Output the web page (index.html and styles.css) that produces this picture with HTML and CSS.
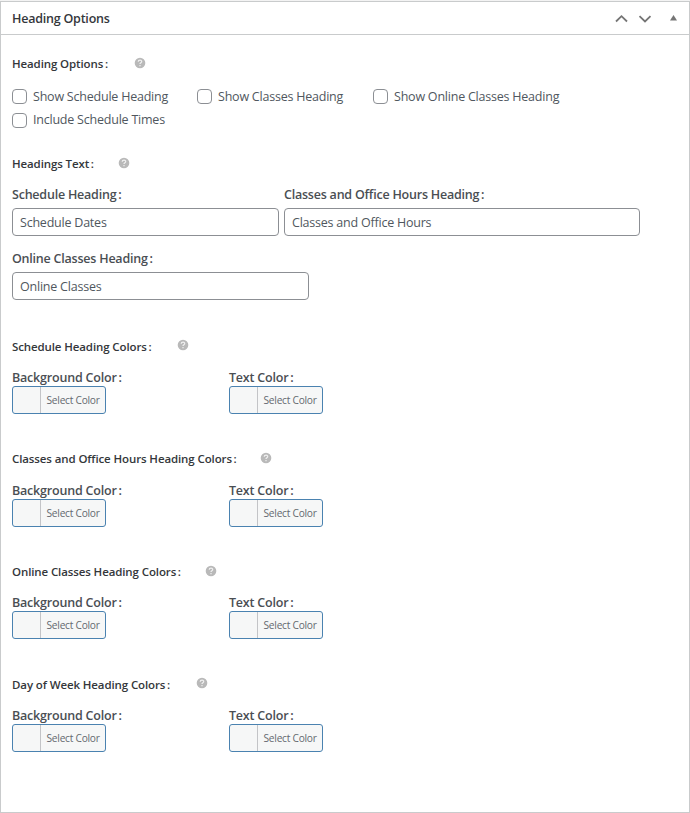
FILE: index.html
```html
<!DOCTYPE html>
<html lang="en">
<head>
<meta charset="utf-8">
<title>Heading Options</title>
<link rel="stylesheet" href="styles.css">
</head>
<body>
<svg width="0" height="0" class="defs">
  <symbol id="help" viewBox="0 0 12 12">
    <circle cx="6" cy="6" r="5.3" fill="#b9b9b9"/>
    <path d="M4.2 4.7C4.3 2.6 7.8 2.6 7.7 4.7C7.6 5.8 6 5.8 6 7.1M6 8.1V9.2" fill="none" stroke="#f0f0f0" stroke-width="1.2"/>
  </symbol>
</svg>
<main class="panel">
  <header class="panel-head">
    <h2>Heading Options</h2>
    <svg class="controls" width="70" height="20" viewBox="0 0 70 20">
      <path d="M4 12.500L9.500 7.200L15 12.500M27.500 7.200L33 12.500L38.500 7.200" fill="none" stroke="#757575" stroke-width="1.800"/>
      <path d="M58 11.500L61.500 6L65 11.500Z" fill="#757575"/>
    </svg>
  </header>
  <section class="options">
    <h3 class="t-options"><span>Heading Options<em> :</em></span><svg class="help"><use href="#help"/></svg></h3>
    <div class="checks">
      <label class="c1"><input type="checkbox"><span>Show Schedule Heading</span></label>
      <label class="c2"><input type="checkbox"><span>Show Classes Heading</span></label>
      <label class="c3"><input type="checkbox"><span>Show Online Classes Heading</span></label>
      <label class="c4"><input type="checkbox"><span>Include Schedule Times</span></label>
    </div>
  </section>
  <section class="texts">
    <h3 class="t-text"><span>Headings Text<em> :</em></span><svg class="help"><use href="#help"/></svg></h3>
    <div class="fields">
      <label class="field f1"><span>Schedule Heading<em> :</em></span><input type="text" value="Schedule Dates"></label>
      <label class="field f2"><span>Classes and Office Hours Heading<em> :</em></span><input type="text" value="Classes and Office Hours"></label>
      <label class="field f3"><span>Online Classes Heading<em> :</em></span><input type="text" value="Online Classes"></label>
    </div>
  </section>
  <section class="colors">
    <h3 class="t-schedule"><span>Schedule Heading Colors<em> :</em></span><svg class="help"><use href="#help"/></svg></h3>
    <div class="pickers">
      <div class="picker bg"><span>Background Color<em> :</em></span><button><i></i><b>Select Color</b></button></div>
      <div class="picker fg"><span>Text Color<em> :</em></span><button><i></i><b>Select Color</b></button></div>
    </div>
  </section>
  <section class="colors">
    <h3 class="t-classes"><span>Classes and Office Hours Heading Colors<em> :</em></span><svg class="help"><use href="#help"/></svg></h3>
    <div class="pickers">
      <div class="picker bg"><span>Background Color<em> :</em></span><button><i></i><b>Select Color</b></button></div>
      <div class="picker fg"><span>Text Color<em> :</em></span><button><i></i><b>Select Color</b></button></div>
    </div>
  </section>
  <section class="colors">
    <h3 class="t-online"><span>Online Classes Heading Colors<em> :</em></span><svg class="help"><use href="#help"/></svg></h3>
    <div class="pickers">
      <div class="picker bg"><span>Background Color<em> :</em></span><button><i></i><b>Select Color</b></button></div>
      <div class="picker fg"><span>Text Color<em> :</em></span><button><i></i><b>Select Color</b></button></div>
    </div>
  </section>
  <section class="colors">
    <h3 class="t-day"><span>Day of Week Heading Colors<em> :</em></span><svg class="help"><use href="#help"/></svg></h3>
    <div class="pickers">
      <div class="picker bg"><span>Background Color<em> :</em></span><button><i></i><b>Select Color</b></button></div>
      <div class="picker fg"><span>Text Color<em> :</em></span><button><i></i><b>Select Color</b></button></div>
    </div>
  </section>
</main>
</body>
</html>
```
FILE: styles.css
```css
* { box-sizing: border-box; }
body {
  margin: 0;
  padding-top: 1px;
  background: #f3f3f3;
  color: #50575e;
  font: 12.5px/20px "Open Sans", "Noto Sans", sans-serif;
  letter-spacing: -0.22px;
}
.defs { display: block; }
.panel {
  height: 812px;
  border: 1px solid #c9cbcc;
  background: #fff;
}
.panel-head {
  display: flex;
  align-items: center;
  justify-content: space-between;
  height: 33px;
  padding: 1px 7px 0 11px;
  border-bottom: 1px solid #c9cbcc;
}
h2, h3 { margin: 0; font-weight: 600; color: #34373b; white-space: nowrap; }
h2 { font-size: 12.5px; }
h3 { display: flex; font-size: 11.5px; height: 20px; letter-spacing: -0.11px; }
em { font-style: normal; word-spacing: -1.2px; }
.help { width: 12px; height: 12px; margin-top: 3px; }
section { padding-left: 11px; }
.options { height: 100px; padding-top: 19px; }
.texts { height: 182px; padding-top: 19px; }
.colors { height: 112.7px; padding-top: 19.7px; }
.colors .help { margin-top: 2.5px; }
h3 span { flex: none; }
.t-options span { width: 122px; }
.t-text span { width: 106px; }
.t-schedule span { width: 165px; }
.t-classes span { width: 248px; }
.t-online span { width: 193px; }
.t-day span { width: 184px; }
.checks {
  display: grid;
  grid-template-columns: 185px 176px 1fr;
  grid-auto-rows: 23.5px;
  margin-top: 11px;
}
.checks label { display: flex; align-items: center; white-space: nowrap; }
.checks input {
  appearance: none;
  width: 15px;
  height: 15px;
  margin: 0 6px 0 0;
  border: 1px solid #8c8f94;
  border-radius: 4px;
  background: #fff;
}
.fields {
  display: grid;
  grid-template-columns: 267px 1fr;
  column-gap: 5px;
  grid-auto-rows: 64px;
  margin-top: 11px;
}
.field span, .picker span { display: block; font-weight: 600; color: #4a4e53; white-space: nowrap; }
.picker span { letter-spacing: -0.2px; }
.field input {
  display: block;
  width: 100%;
  height: 28px;
  margin-top: 3px;
  padding: 0 7px;
  border: 1px solid #8c8f94;
  border-radius: 4px;
  font: inherit;
  letter-spacing: inherit;
  color: #50575e;
}
.f2 { width: 356px; }
.f3 { width: 297px; }
.pickers { display: grid; grid-template-columns: 217px 1fr; margin-top: 11.3px; }
button {
  display: flex;
  width: 94px;
  height: 28px;
  margin-top: -2px;
  padding: 0;
  border: 1px solid #4a82b0;
  border-radius: 3px;
  background: #f6f7f7;
  font: 10.2px/26px "Open Sans", "Noto Sans", sans-serif;
  letter-spacing: -0.25px;
  color: #646970;
  white-space: nowrap;
}
button i { width: 28px; height: 26px; border-right: 1px solid #c3c4c7; }
button b { padding-left: 5.5px; font-weight: 400; }
```
